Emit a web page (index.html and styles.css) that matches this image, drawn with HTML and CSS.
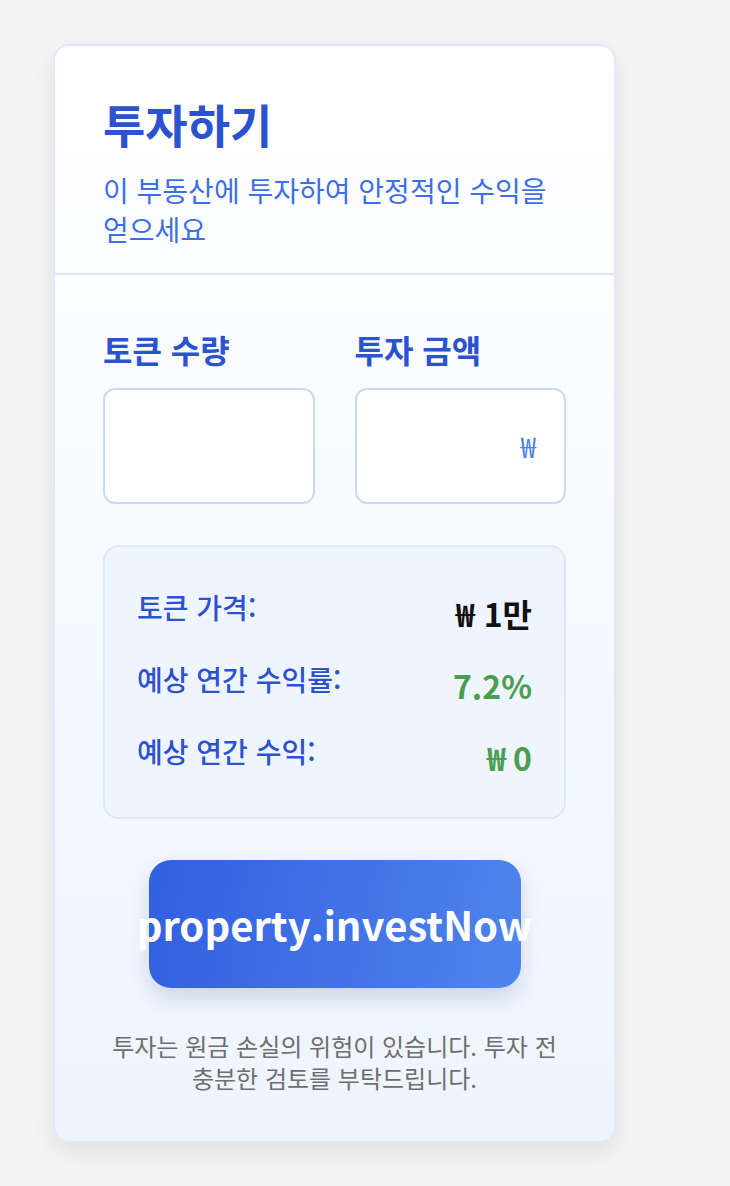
FILE: index.html
```html
<!DOCTYPE html>
<html lang="ko">
<head>
<meta charset="utf-8">
<title>투자하기</title>
<link rel="stylesheet" href="styles.css">
</head>
<body>
<div class="card">
  <div class="card-header">
    <h1 class="title">투자하기</h1>
    <p class="subtitle">이 부동산에 투자하여 안정적인 수익을 얻으세요</p>
  </div>
  <div class="card-body">
    <div class="fields">
      <div class="field">
        <label class="field-label">토큰 수량</label>
        <div class="input-wrap"><input class="input" type="text"></div>
      </div>
      <div class="field">
        <label class="field-label">투자 금액</label>
        <div class="input-wrap"><input class="input" type="text"><span class="suffix">₩</span></div>
      </div>
    </div>
    <div class="summary">
      <div class="row"><span class="row-label">토큰 가격:</span><span class="row-value dark">₩ 1만</span></div>
      <div class="row"><span class="row-label">예상 연간 수익률:</span><span class="row-value green">7.2%</span></div>
      <div class="row"><span class="row-label">예상 연간 수익:</span><span class="row-value green">₩ 0</span></div>
    </div>
    <div class="btn-wrap">
      <button class="invest-btn">property.investNow</button>
    </div>
    <p class="disclaimer">투자는 원금 손실의 위험이 있습니다. 투자 전 충분한 검토를 부탁드립니다.</p>
  </div>
</div>
</body>
</html>
```
FILE: styles.css
```css
* { box-sizing: border-box; }
html, body { margin: 0; padding: 0; }
body {
  background: #f4f4f4;
  font-family: "Noto Sans CJK KR", "Noto Sans", sans-serif;
  padding: 44px 0 0 53px;
  min-height: 1186px;
  word-break: keep-all;
}
.card {
  width: 563px;
  border: 2px solid #dfe9fb;
  border-radius: 16px;
  background: linear-gradient(180deg, #ffffff 0%, #eef4fe 100%);
  box-shadow: 0 10px 24px rgba(0, 0, 0, 0.08);
  overflow: hidden;
}
.card-header {
  padding: 50px 48px 24px;
  border-bottom: 2px solid #dbe7f8;
}
.title {
  margin: 0;
  font-size: 46px;
  font-weight: 700;
  line-height: 55px;
  color: #2b52cf;
}
.subtitle {
  margin: 20px 0 0;
  font-size: 28px;
  line-height: 39px;
  color: #3d6fe3;
}
.card-body {
  padding: 53px 48px 47px;
}
.fields {
  display: grid;
  grid-template-columns: 1fr 1fr;
  column-gap: 40px;
}
.field-label {
  display: block;
  font-size: 32px;
  font-weight: 700;
  line-height: 42px;
  color: #2b52cf;
  margin-bottom: 18px;
}
.input-wrap { position: relative; }
.input {
  display: block;
  width: 100%;
  height: 116px;
  border: 2px solid #c6dbf7;
  border-radius: 12px;
  background: #fff;
  font: inherit;
  font-size: 26px;
  padding: 0 20px;
  outline: none;
}
.suffix {
  position: absolute;
  right: 30px;
  top: 50%;
  transform: translateY(-50%);
  font-size: 28px;
  color: #4b7fe8;
}
.summary {
  margin-top: 41px;
  border: 2px solid #dce8f8;
  border-radius: 16px;
  background: #eff5fe;
  padding: 44px 32px 38px;
  display: flex;
  flex-direction: column;
  gap: 28px;
}
.row {
  display: flex;
  justify-content: space-between;
  align-items: center;
  height: 44px;
}
.row-label {
  font-size: 28px;
  font-weight: 500;
  color: #2b52cf;
  line-height: 32px;
  align-self: flex-start;
}
.row-value {
  font-size: 32px;
  font-weight: 700;
  line-height: 1;
}
.dark { color: #111; }
.green { color: #4a9e50; }
.btn-wrap {
  display: flex;
  justify-content: center;
  margin-top: 41px;
}
.invest-btn {
  width: 372px;
  height: 128px;
  border: none;
  border-radius: 22px;
  background: linear-gradient(100deg, #325fe0 0%, #4f84ec 100%);
  box-shadow: 0 10px 20px rgba(40, 70, 140, 0.18);
  color: #fff;
  font-family: inherit;
  font-size: 40px;
  font-weight: 700;
  white-space: nowrap;
  display: flex;
  justify-content: center;
  align-items: center;
  overflow: visible;
  padding: 0;
}
.disclaimer {
  margin: 42px 0 0;
  text-align: center;
  font-size: 24px;
  line-height: 32px;
  color: #6e6e6e;
}
```
